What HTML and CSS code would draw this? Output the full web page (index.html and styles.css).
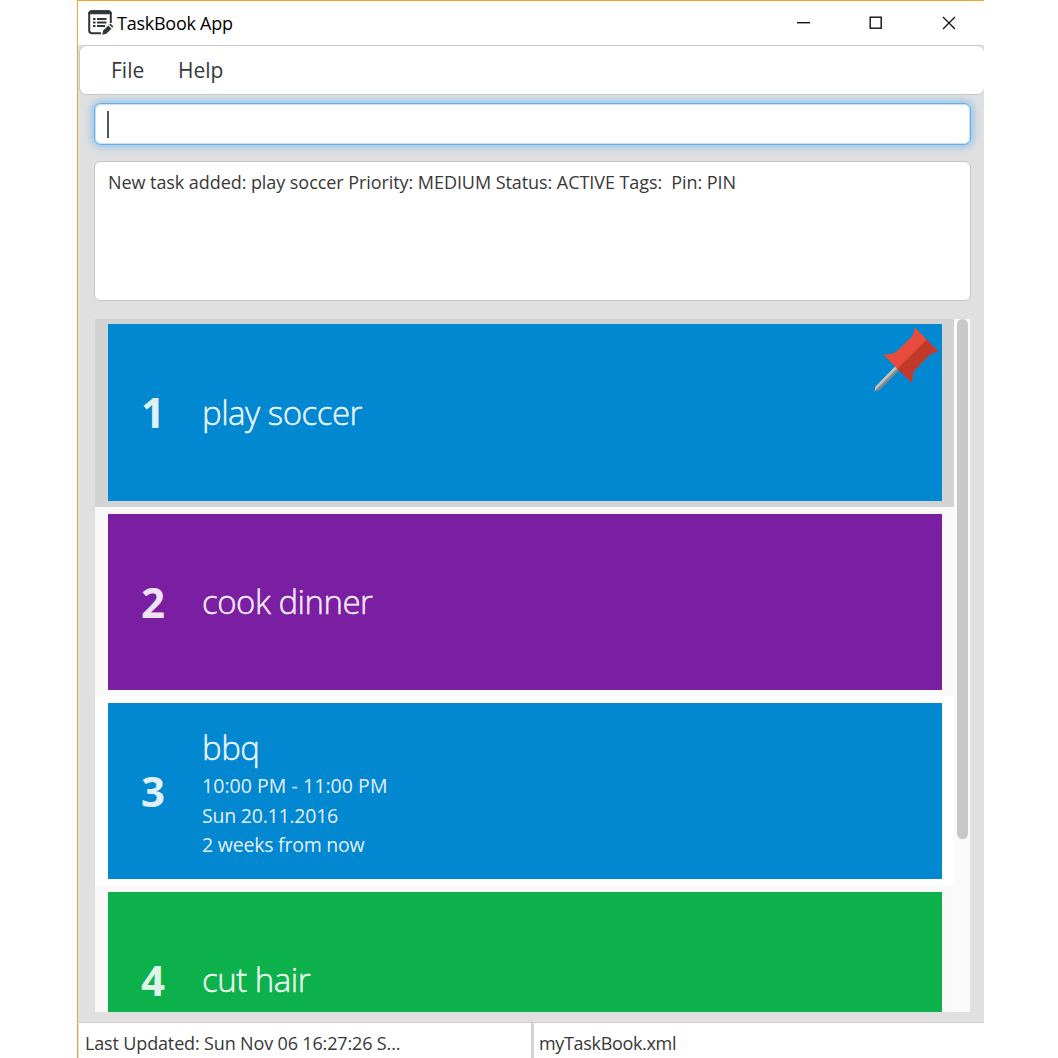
FILE: index.html
```html
<!DOCTYPE html>
<html lang="en">
<head>
<meta charset="utf-8">
<title>TaskBook App</title>
<link rel="stylesheet" href="styles.css">
</head>
<body>
<div class="window">
  <header class="titlebar">
    <svg class="app-icon" width="26" height="26" viewBox="0 0 26 26" fill="none">
      <path d="M13 23.300H4Q1.200 23.300 1.200 20.500V4Q1.200 1.200 4 1.200H20Q22.800 1.200 22.800 4V13" stroke="#333639" stroke-width="2"/>
      <path d="M.2 4.300Q.2 .2 4 .2H20Q23.800 .2 23.800 4.300H.2Z" fill="#333639"/>
      <path d="M5 9H7.500M5 12.500H7.500M5 16H7.500M9 9H18.500M9 12.500H18.500M9 16H17" stroke="#333639" stroke-width="1.900"/>
      <path d="M14.200 24.700L15.200 20.500L20.300 15.500L23.500 18.700L18.300 23.700Z" fill="#333639"/>
      <path d="M21.200 14.600L22.400 13.500L25.300 16.500L24.300 17.700Z" fill="#333639"/>
    </svg>
    <span class="title">TaskBook App</span>
    <svg class="controls" width="160" height="14" viewBox="0 0 160 14" fill="none" stroke="#111" stroke-width="1.400">
      <path d="M0 6.700H13"/>
      <rect x="73.200" y="1.200" width="11" height="11"/>
      <path d="M146 1L158 13M158 1L146 13" stroke-width="1.300"/>
    </svg>
  </header>
  <nav class="menubar"><span class="menu file">File</span><span class="menu help">Help</span></nav>
  <main class="content">
    <div class="command"><span class="caret"></span></div>
    <div class="result"><span class="message">New task added: play soccer Priority: MEDIUM Status: ACTIVE Tags:&nbsp; Pin: PIN</span></div>
    <div class="list">
      <div class="rows">
        <div class="row selected"><div class="card blue"><b class="num">1</b><div class="info"><span class="name">play soccer</span></div>
          <svg class="pin" width="66" height="66" viewBox="0 0 66 66">
            <path d="M21 39.500L25 43.500L5.500 63L.5 64.500L1.500 59.500Z" fill="#7f8c8d"/>
            <path d="M21 39.500L23 41.500L2.500 62L.5 64.500L1.500 59.500Z" fill="#bdc3c7"/>
            <path d="M40.500 0L64.500 24.500Q57 26 54.500 29L40 44Q38.500 47 38 56L9 27.500Q18 27.500 22 25L37 10.500Q40.500 7 40.500 0Z" fill="#e74c3c"/>
            <path d="M52.500 12.500L64.500 24.500Q57 26 54.500 29L40 44Q38.500 47 38 56L23.500 42Z" fill="#c0392b"/>
          </svg>
        </div></div>
        <div class="row"><div class="card purple"><b class="num">2</b><div class="info"><span class="name">cook dinner</span></div></div></div>
        <div class="row odd"><div class="card blue"><b class="num">3</b><div class="info"><span class="name">bbq</span><span class="detail time">10:00 PM - 11:00 PM</span><span class="detail">Sun 20.11.2016</span><span class="detail">2 weeks from now</span></div></div></div>
        <div class="row"><div class="card green"><b class="num">4</b><div class="info"><span class="name">cut hair</span></div></div></div>
      </div>
      <div class="track"><div class="thumb"></div></div>
    </div>
  </main>
  <footer class="statusbar"><div class="status left">Last Updated: Sun Nov 06 16:27:26 S...</div><div class="status path">myTaskBook.xml</div></footer>
</div>
</body>
</html>
```
FILE: styles.css
```css
* { box-sizing: border-box; }
body { margin: 0; background: #fff; font-family: "Open Sans", "Noto Sans", sans-serif; color: #383838; }
.window { width: 907px; height: 1058px; margin-left: 77px; border-left: 1px solid #eda63c; border-top: 1px solid #f0a62e; background: #e0e0e0; display: flex; flex-direction: column; overflow: hidden; }
.titlebar { height: 44px; flex: none; background: #fff; display: flex; align-items: center; padding: 0 27px 0 10px; }
.app-icon { flex: none; margin-top: -1px; }
.title { margin-left: 3px; color: #000; font-size: 18px; line-height: 44px; letter-spacing: -.25px; white-space: nowrap; }
.controls { margin-left: auto; }
.menubar { height: 50px; flex: none; margin-left: 1px; background: #fff; border: solid #c8c8c8; border-width: 1px; border-right-width: 0; border-radius: 7px; display: flex; align-items: center; font-size: 21px; }
.menu { white-space: nowrap; line-height: 46px; }
.file { margin-left: 31px; width: 67px; }
.content { flex: 1; min-height: 0; padding: 8px 13px 10px 16px; display: flex; flex-direction: column; }
.command { height: 42px; flex: none; background: #fff; border: 1px solid #62b1ee; border-radius: 7px; box-shadow: 0 0 9px 2px rgba(100,175,235,.65), inset 0 0 0 1px #c5e2f8; padding: 7px 12px; }
.caret { display: block; width: 2px; height: 27px; background: #555; }
.result { height: 140px; flex: none; margin-top: 16px; background: #fff; border: 1px solid #c6c6c6; border-radius: 6px; padding: 8px 13px; }
.message { display: block; font-size: 18px; line-height: 25px; letter-spacing: -.065px; white-space: nowrap; }
.list { flex: 1; min-height: 0; margin: 18px 1px 0; display: flex; background: #fafafa; overflow: hidden; }
.rows { width: 859px; flex: none; }
.row { height: 189px; padding: 7px 12px 6px 13px; background: #f9f9f9; }
.row.selected { height: 188px; padding-top: 5px; background: #d3d3d3; }
.row.selected .card { height: 177px; }
.row.odd { background: #fff; }
.card { position: relative; height: 176px; display: flex; align-items: center; color: rgba(255,255,255,.9); }
.blue { background: #0288d1; }
.purple { background: #7b1fa2; }
.green { background: #0db14b; }
.num { width: 94px; padding: 0 4px 1px 0; text-align: center; font-size: 42px; line-height: 50px; }
.info { display: flex; flex-direction: column; align-items: flex-start; }
.name { font-size: 33px; line-height: 44px; font-weight: 300; letter-spacing: -.5px; -webkit-text-stroke: .5px currentColor; white-space: nowrap; }
.detail { font-size: 19.500px; line-height: 29.700px; letter-spacing: -.22px; white-space: nowrap; }
.time { margin-top: 1px; letter-spacing: .05px; }
.info:has(.detail) { padding-top: 4px; }
.pin { position: absolute; right: 2px; top: 3px; }
.track { width: 16px; padding-left: 3px; }
.thumb { width: 11px; height: 520px; border-radius: 6px; background: #c8c8c8; }
.statusbar { height: 36px; flex: none; margin-left: 1px; border-top: 1px solid #d0d0d0; display: flex; background: #fff; font-size: 18px; }
.status { line-height: 40px; white-space: nowrap; padding-left: 5px; letter-spacing: -.15px; }
.left { width: 455px; padding-left: 6px; border-right: 3px solid #d3d3d3; }
.path { letter-spacing: -.33px; }
```
